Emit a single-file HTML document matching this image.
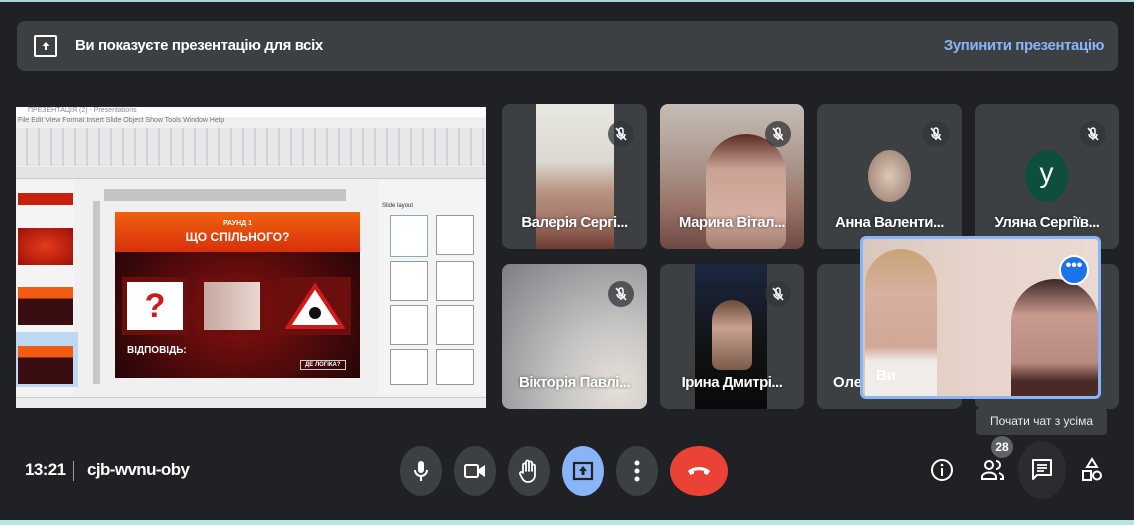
<!DOCTYPE html>
<html><head><meta charset="utf-8"><style>
*{margin:0;padding:0;box-sizing:border-box}
body{width:1134px;height:525px;background:#202124;position:relative;overflow:hidden;font-family:"Liberation Sans","DejaVu Sans",sans-serif;color:#fff}
.abs{position:absolute}
.tile{position:absolute;background:#3c4043;border-radius:8px;overflow:hidden}
.lbl{position:absolute;left:0;right:0;bottom:18px;text-align:center;font-size:15px;font-weight:bold;color:#fff;text-shadow:0 0 3px rgba(0,0,0,.6);white-space:nowrap;letter-spacing:-.5px}
.mic{position:absolute;width:26px;height:26px;border-radius:50%;background:rgba(50,52,56,.75);top:17px;right:13px}
.mic svg{position:absolute;left:5px;top:5px}
.btn{position:absolute;top:446px;width:42px;height:50px;border-radius:50%;background:#3c4043}
.btn svg{position:absolute;left:50%;top:50%;transform:translate(-50%,-50%)}
</style></head><body>
<div class="abs" style="left:0;top:0;width:1134px;height:2px;background:#a9d6d8"></div>
<div class="abs" style="left:0;top:520px;width:1134px;height:5px;background:#b7e3e5"></div>

<div class="abs" style="left:17px;top:21px;width:1101px;height:50px;background:#3c4043;border-radius:8px">
 <div class="abs" style="left:17px;top:14px;width:23px;height:22px;border:2.5px solid #fff;border-radius:2px"></div>
 <svg class="abs" style="left:24px;top:20px" width="10" height="10" viewBox="0 0 10 10"><path d="M5 1L1.5 5H4V9H6V5H8.5Z" fill="#fff"/></svg>
 <div class="abs" style="left:58px;top:16px;font-size:15px;font-weight:bold;letter-spacing:-.4px">Ви показуєте презентацію для всіх</div>
 <div class="abs" style="right:14px;top:16px;font-size:15px;font-weight:bold;color:#8ab4f8;letter-spacing:-.4px">Зупинити презентацію</div>
</div>

<!-- presentation -->
<div class="abs" style="left:16px;top:107px;width:470px;height:301px;background:#f0f0f0;overflow:hidden">
 <div class="abs" style="left:0;top:0;width:470px;height:10px;background:#fff;font-size:7px;color:#888;padding-left:12px">ПРЕЗЕНТАЦІЯ (2) - Presentations</div>
 <div class="abs" style="left:0;top:10px;width:470px;height:10px;font-size:7px;color:#777;padding-left:2px">File Edit View Format Insert Slide Object Show Tools Window Help</div>
 <div class="abs" style="left:0;top:21px;width:470px;height:38px;background:repeating-linear-gradient(90deg,#e8e8e8 0 10px,#d0d4dc 10px 12px)"></div>
 <div class="abs" style="left:0;top:60px;width:470px;height:12px;background:#e4e4e4;border-bottom:1px solid #ccc"></div>
 <div class="abs" style="left:0;top:73px;width:58px;height:215px;background:#f4f4f4"></div>
 <div class="abs" style="left:2px;top:86px;width:55px;height:12px;background:#c8200c"></div>
 <div class="abs" style="left:2px;top:121px;width:55px;height:37px;background:radial-gradient(#e53a1c,#9c1006)"></div>
 <div class="abs" style="left:2px;top:180px;width:55px;height:38px;background:linear-gradient(#f35b12 0 30%,#3a0e10 30%)"></div>
 <div class="abs" style="left:0;top:225px;width:62px;height:55px;background:#bcd8f4"></div>
 <div class="abs" style="left:2px;top:239px;width:55px;height:38px;background:linear-gradient(#f35b12 0 30%,#3a0e10 30%)"></div>
 <div class="abs" style="left:77px;top:94px;width:7px;height:183px;background:#c8c8c8"></div>
 <div class="abs" style="left:88px;top:82px;width:242px;height:12px;background:#c4c4c4"></div>
 <div class="abs" style="left:99px;top:105px;width:245px;height:166px;background:radial-gradient(ellipse at 50% 60%,#8a1010,#2a0608 80%)">
  <div class="abs" style="left:0;top:0;width:245px;height:40px;background:linear-gradient(#f0620e,#d8300a)"></div>
  <div class="abs" style="left:0;top:8px;width:245px;text-align:center;font-size:7px;font-weight:bold">РАУНД 1</div>
  <div class="abs" style="left:0;top:18px;width:245px;text-align:center;font-size:12px;font-weight:bold">ЩО СПІЛЬНОГО?</div>
  <div class="abs" style="left:7px;top:65px;width:66px;height:58px;background:#6a0e0e;padding:5px"><div style="width:100%;height:100%;background:#fff;color:#d01a1a;font-size:34px;font-weight:bold;text-align:center;line-height:48px">?</div></div>
  <div class="abs" style="left:84px;top:65px;width:66px;height:58px;background:#6a0e0e;padding:5px"><div style="width:100%;height:100%;background:linear-gradient(90deg,#c7a8a0,#e8d8d0)"></div></div>
  <div class="abs" style="left:164px;top:65px;width:72px;height:58px;background:#6a0e0e;padding:6px"><svg width="60" height="46"><path d="M30 3L57 44H3Z" fill="#fff" stroke="#d01a1a" stroke-width="4"/><circle cx="30" cy="30" r="6" fill="#111"/></svg></div>
  <div class="abs" style="left:12px;top:133px;font-size:10px;font-weight:bold">ВІДПОВІДЬ:</div>
  <div class="abs" style="left:185px;top:148px;font-size:6px;font-weight:bold;border:1px solid #ccc;padding:1px 4px">ДЕ ЛОГІКА?</div>
 </div>
 <div class="abs" style="left:363px;top:73px;width:107px;height:215px;background:#f4f4f4"></div>
 <div class="abs" style="left:366px;top:96px;font-size:6px;color:#333">Slide layout</div>
 <div class="abs" style="left:374px;top:108px;width:38px;height:42px;background:#fff;border:1px solid #8ab"></div>
 <div class="abs" style="left:420px;top:108px;width:38px;height:40px;background:#fff;border:1px solid #999"></div>
 <div class="abs" style="left:374px;top:154px;width:38px;height:40px;background:#fff;border:1px solid #999"></div>
 <div class="abs" style="left:420px;top:154px;width:38px;height:40px;background:#fff;border:1px solid #999"></div>
 <div class="abs" style="left:374px;top:198px;width:38px;height:40px;background:#fff;border:1px solid #999"></div>
 <div class="abs" style="left:420px;top:198px;width:38px;height:40px;background:#fff;border:1px solid #999"></div>
 <div class="abs" style="left:374px;top:242px;width:38px;height:36px;background:#fff;border:1px solid #999"></div>
 <div class="abs" style="left:420px;top:242px;width:38px;height:36px;background:#fff;border:1px solid #999"></div>
 <div class="abs" style="left:0;top:290px;width:470px;height:11px;background:#ececec;border-top:1px solid #ccc;font-size:6px;color:#555"></div>
</div>

<!-- tiles row 1 -->
<div class="tile" style="left:502px;top:104px;width:145px;height:145px">
 <div class="abs" style="left:34px;top:0;width:78px;height:145px;background:linear-gradient(#e9e8e2 0,#dcd9d2 40%,#b99484 60%,#a27668 80%,#6e3a30)"></div>
 <div class="mic"><svg width="16" height="16" viewBox="0 0 16 16"><path d="M8 2a2 2 0 0 1 2 2v4a2 2 0 0 1-4 0V4a2 2 0 0 1 2-2zM4 8a4 4 0 0 0 8 0M8 12v2M3 2l10 12" stroke="#fff" stroke-width="1.5" fill="none"/></svg></div>
 <div class="lbl">Валерія Сергі...</div>
</div>
<div class="tile" style="left:660px;top:104px;width:144px;height:145px;background:linear-gradient(180deg,#c6bdb6,#a89288 45%,#9a7368 70%,#6f4a44)">
 <div class="abs" style="left:46px;top:30px;width:80px;height:115px;border-radius:40px 40px 10px 10px;background:linear-gradient(#5a2a22,#c9a294 30%,#d4aea0 70%,#a07a6e)"></div>
 <div class="mic"><svg width="16" height="16" viewBox="0 0 16 16"><path d="M8 2a2 2 0 0 1 2 2v4a2 2 0 0 1-4 0V4a2 2 0 0 1 2-2zM4 8a4 4 0 0 0 8 0M8 12v2M3 2l10 12" stroke="#fff" stroke-width="1.5" fill="none"/></svg></div>
 <div class="lbl">Марина Вітал...</div>
</div>
<div class="tile" style="left:817px;top:104px;width:145px;height:145px">
 <div class="abs" style="left:51px;top:46px;width:43px;height:52px;border-radius:50%;background:radial-gradient(#e0c8b8,#a89080 70%,#6a5a50)"></div>
 <div class="mic"><svg width="16" height="16" viewBox="0 0 16 16"><path d="M8 2a2 2 0 0 1 2 2v4a2 2 0 0 1-4 0V4a2 2 0 0 1 2-2zM4 8a4 4 0 0 0 8 0M8 12v2M3 2l10 12" stroke="#fff" stroke-width="1.5" fill="none"/></svg></div>
 <div class="lbl">Анна Валенти...</div>
</div>
<div class="tile" style="left:975px;top:104px;width:144px;height:145px">
 <div class="abs" style="left:50px;top:46px;width:43px;height:52px;border-radius:50%;background:#0d4f3c;text-align:center;font-size:28px;line-height:46px">у</div>
 <div class="mic"><svg width="16" height="16" viewBox="0 0 16 16"><path d="M8 2a2 2 0 0 1 2 2v4a2 2 0 0 1-4 0V4a2 2 0 0 1 2-2zM4 8a4 4 0 0 0 8 0M8 12v2M3 2l10 12" stroke="#fff" stroke-width="1.5" fill="none"/></svg></div>
 <div class="lbl">Уляна Сергіїв...</div>
</div>

<!-- row 2 -->
<div class="tile" style="left:502px;top:264px;width:145px;height:145px;background:radial-gradient(ellipse at 80% 85%,#e6e0d8 0,#c7c5c4 35%,#9e9fa2 70%,#7c7e82)">
 <div class="mic"><svg width="16" height="16" viewBox="0 0 16 16"><path d="M8 2a2 2 0 0 1 2 2v4a2 2 0 0 1-4 0V4a2 2 0 0 1 2-2zM4 8a4 4 0 0 0 8 0M8 12v2M3 2l10 12" stroke="#fff" stroke-width="1.5" fill="none"/></svg></div>
 <div class="lbl">Вікторія Павлі...</div>
</div>
<div class="tile" style="left:660px;top:264px;width:144px;height:145px">
 <div class="abs" style="left:35px;top:0;width:72px;height:145px;background:linear-gradient(#1b2740,#111 60%,#0a0a0a)"></div>
 <div class="abs" style="left:52px;top:36px;width:40px;height:70px;border-radius:20px 20px 8px 8px;background:linear-gradient(#6a4a3a,#c8a090 40%,#7a5a48)"></div>
 <div class="mic"><svg width="16" height="16" viewBox="0 0 16 16"><path d="M8 2a2 2 0 0 1 2 2v4a2 2 0 0 1-4 0V4a2 2 0 0 1 2-2zM4 8a4 4 0 0 0 8 0M8 12v2M3 2l10 12" stroke="#fff" stroke-width="1.5" fill="none"/></svg></div>
 <div class="lbl">Ірина Дмитрі...</div>
</div>
<div class="tile" style="left:817px;top:264px;width:145px;height:145px">
 <div class="abs" style="left:16px;bottom:18px;font-size:15px;font-weight:bold">Оле</div>
</div>
<div class="tile" style="left:975px;top:264px;width:144px;height:145px"></div>

<!-- self view -->
<div class="abs" style="left:860px;top:236px;width:241px;height:163px;border:3px solid #8ab4f8;border-radius:6px;overflow:hidden;background:linear-gradient(90deg,#d8c8bc,#e8d4cc 50%,#eadad2)">
 <div class="abs" style="left:2px;top:10px;width:72px;height:150px;border-radius:36px 36px 0 0;background:linear-gradient(#c9a478,#d8b0a0 30%,#d0a898 65%,#f0ece8 75%)"></div>
 <div class="abs" style="left:148px;top:40px;width:88px;height:120px;border-radius:44px 44px 0 0;background:linear-gradient(#3a2624,#c89a90 30%,#b88a80 70%,#4a2a26 85%)"></div>
 <div class="abs" style="left:196px;top:16px;width:30px;height:30px;border-radius:50%;background:#1a73e8;border:2px solid #fff;text-align:center;font-size:16px;line-height:18px;font-weight:bold">•••</div>
 <div class="abs" style="left:13px;top:128px;font-size:15px;font-weight:bold;letter-spacing:-.3px">Ви</div>
</div>

<!-- tooltip -->
<div class="abs" style="left:976px;top:408px;width:131px;height:27px;background:#3c4043;border-radius:4px;font-size:12px;text-align:center;line-height:27px;color:#e8eaed">Почати чат з усіма</div>

<!-- bottom -->
<div class="abs" style="left:25px;top:460px;font-size:17px;font-weight:bold;letter-spacing:-.6px">13:21</div>
<div class="abs" style="left:73px;top:461px;width:1px;height:20px;background:#9aa0a6"></div>
<div class="abs" style="left:87px;top:460px;font-size:17px;font-weight:bold;letter-spacing:-.6px">cjb-wvnu-oby</div>

<div class="btn" style="left:400px"><svg width="16" height="22" viewBox="0 0 16 22"><rect x="5" y="1" width="6" height="12" rx="3" fill="#fff"/><path d="M2 10a6 6 0 0 0 12 0M8 16v5" stroke="#fff" stroke-width="2" fill="none"/></svg></div>
<div class="btn" style="left:454px"><svg width="22" height="16" viewBox="0 0 22 16"><rect x="1" y="2" width="13" height="12" rx="1.5" stroke="#fff" stroke-width="2" fill="none"/><path d="M15 6l6-4v12l-6-4z" fill="#fff"/></svg></div>
<div class="btn" style="left:508px"><svg width="20" height="24" viewBox="0 0 20 24"><path d="M4 14V6a1.5 1.5 0 0 1 3 0v6V3a1.5 1.5 0 0 1 3 0v9V4a1.5 1.5 0 0 1 3 0v8V7a1.5 1.5 0 0 1 3 0v9c0 4-3 7-7 7-3 0-5-2-6-4l-2-4a1.5 1.5 0 0 1 3-1z" stroke="#fff" stroke-width="1.8" fill="none" stroke-linejoin="round"/></svg></div>
<div class="btn" style="left:562px;background:#8ab4f8"><svg width="22" height="20" viewBox="0 0 22 20"><rect x="2" y="2" width="18" height="16" stroke="#202124" stroke-width="2.2" fill="none"/><path d="M11 5l-4 5h2.5v4h3v-4H15z" fill="#202124"/></svg></div>
<div class="btn" style="left:616px"><svg width="6" height="22" viewBox="0 0 6 22"><circle cx="3" cy="3" r="2.5" fill="#fff"/><circle cx="3" cy="11" r="2.5" fill="#fff"/><circle cx="3" cy="19" r="2.5" fill="#fff"/></svg></div>
<div class="btn" style="left:670px;width:58px;background:#ea4335"><svg width="24" height="10" viewBox="0 0 24 10"><path d="M12 1C7 1 3 3 1 5l2.5 4L7 7.5V5c3-1 7-1 10 0v2.5L20.5 9 23 5c-2-2-6-4-11-4z" fill="#fff"/></svg></div>

<svg class="abs" style="left:930px;top:458px" width="24" height="24" viewBox="0 0 24 24"><circle cx="12" cy="12" r="10" stroke="#fff" stroke-width="2" fill="none"/><rect x="11" y="10" width="2" height="8" fill="#fff"/><circle cx="12" cy="7" r="1.3" fill="#fff"/></svg>
<svg class="abs" style="left:980px;top:459px" width="26" height="22" viewBox="0 0 26 22"><circle cx="9" cy="6" r="4" stroke="#fff" stroke-width="2" fill="none"/><path d="M2 20v-2c0-3 4-4.5 7-4.5s7 1.5 7 4.5v2z" stroke="#fff" stroke-width="2" fill="none"/><path d="M16 2a4 4 0 0 1 0 8M19 14c2 .8 4 2 4 4v2h-3" stroke="#fff" stroke-width="2" fill="none"/></svg>
<div class="abs" style="left:991px;top:436px;width:22px;height:22px;border-radius:50%;background:#5f6368;font-size:12px;font-weight:bold;text-align:center;line-height:22px">28</div>
<div class="abs" style="left:1018px;top:441px;width:48px;height:58px;border-radius:50%;background:#2b2c30"></div>
<svg class="abs" style="left:1031px;top:458px" width="22" height="24" viewBox="0 0 22 24"><path d="M2 2h18v15H6l-4 4z" stroke="#fff" stroke-width="2" fill="none" stroke-linejoin="round"/><path d="M6 7h10M6 10h10M6 13h7" stroke="#fff" stroke-width="1.8"/></svg>
<svg class="abs" style="left:1081px;top:457px" width="22" height="26" viewBox="0 0 22 26"><path d="M11 2l5 8H6z" stroke="#fff" stroke-width="2" fill="none"/><rect x="2" y="14" width="8" height="9" stroke="#fff" stroke-width="2" fill="none"/><circle cx="16" cy="18.5" r="4" stroke="#fff" stroke-width="2" fill="none"/></svg>
</body></html>
